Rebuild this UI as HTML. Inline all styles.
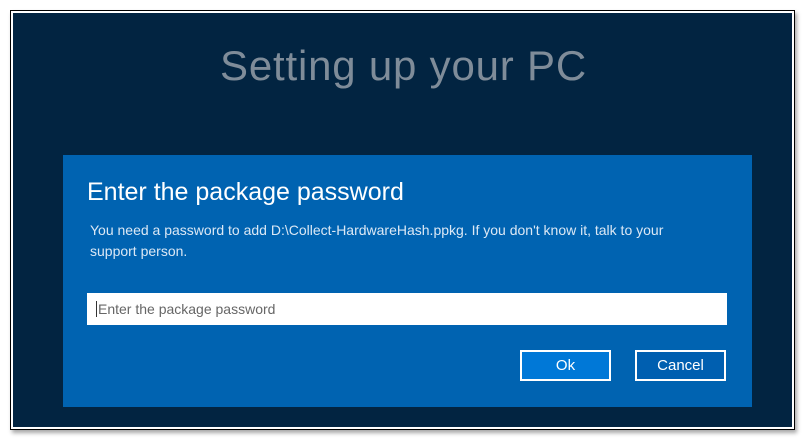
<!DOCTYPE html>
<html><head><style>
body{margin:0;width:807px;height:444px;background:#fff;position:relative;overflow:hidden;font-family:"Liberation Sans",sans-serif}
.frame{position:absolute;left:10px;top:10px;width:783px;height:418px;border:1px solid #000;background:#fff;box-shadow:2px 3px 4px rgba(0,0,0,.35)}
.bg{position:absolute;left:13px;top:13px;width:779px;height:414px;background:#022441}
.title{position:absolute;left:0;width:807px;top:42px;text-align:center;color:#7f8c99;font-size:42px;font-weight:300;letter-spacing:0.8px}
.dlg{position:absolute;left:63px;top:155px;width:689px;height:252px;background:#0063b1}
.h{position:absolute;left:87px;top:178px;color:#fff;font-size:25px}
.p{position:absolute;left:90px;top:220px;color:#dbe8f5;font-size:14px;line-height:21px;width:610px}
.in{position:absolute;left:87px;top:293px;width:640px;height:32px;background:#fff;color:#666;font-size:14px;line-height:32px;box-sizing:border-box;padding-left:9px}
.in span{border-left:1px solid #333;padding-left:1px}
.b{position:absolute;top:350px;width:91px;height:31px;box-sizing:border-box;border:2px solid #fff;color:#fff;font-size:15px;text-align:center;line-height:27px}
</style></head><body>
<div class="frame"></div>
<div class="bg"></div>
<div class="title">Setting up your PC</div>
<div class="dlg"></div>
<div class="h">Enter the package password</div>
<div class="p">You need a password to add D:\Collect-HardwareHash.ppkg. If you don't know it, talk to your support person.</div>
<div class="in"><span>Enter the package password</span></div>
<div class="b" style="left:520px;background:#0078d7">Ok</div>
<div class="b" style="left:635px;background:#005fb0">Cancel</div>
</body></html>
